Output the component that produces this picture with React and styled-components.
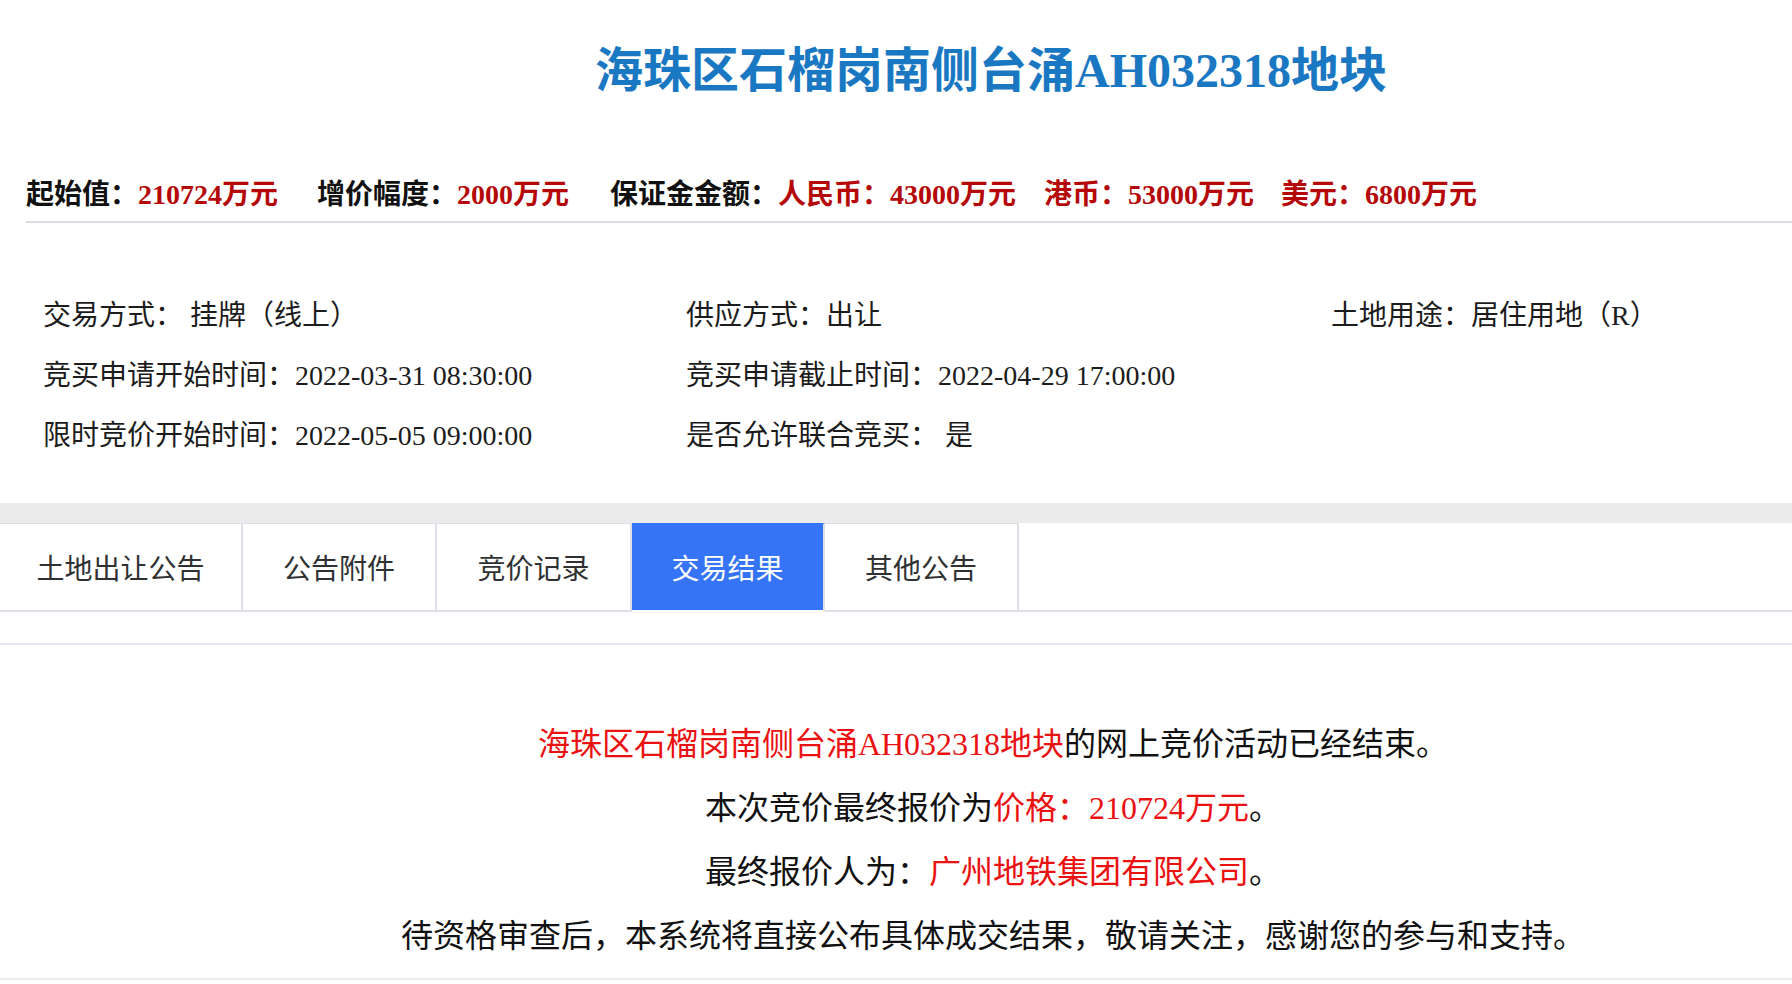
import React from "react";
import styled, { createGlobalStyle, css } from "styled-components";

const GlobalStyle = createGlobalStyle`
  html, body {
    margin: 0;
    padding: 0;
    background: #ffffff;
  }
  body {
    font-family: "Liberation Serif", "Noto Sans CJK SC", serif;
    color: #222;
  }
`;

const Page = styled.div`
  width: 1792px;
  min-height: 984px;
  background: #fff;
  overflow: hidden;
`;

const Title = styled.h1`
  margin: 0;
  padding: 47px 0 0 190px;
  text-align: center;
  font-size: 48px;
  line-height: 48px;
  font-weight: bold;
  color: #1a78c2;
  font-family: "Liberation Serif", "Noto Sans CJK SC", serif;
`;

const PriceRow = styled.div`
  display: flex;
  align-items: center;
  margin: 80px 0 0 26px;
  padding-bottom: 6px;
  height: 40px;
  border-bottom: 2px solid #d9dce3;
  font-size: 28px;
  line-height: 40px;
  font-weight: bold;
  white-space: nowrap;
`;

const PriceItem = styled.span`
  color: #111;
  margin-right: ${(p) => p.$gap || 0}px;
`;

const Red = styled.span`
  color: #b50808;
`;

const InfoGrid = styled.div`
  display: grid;
  grid-template-columns: 643px 645px 1fr;
  grid-auto-rows: 60px;
  padding: 60px 0 40px 43px;
  font-size: 28px;
  color: #1c1c1c;
`;

const InfoCell = styled.div`
  display: flex;
  align-items: center;
  white-space: nowrap;
`;

const GrayBand = styled.div`
  height: 20px;
  background: #ebebeb;
`;

const TabBar = styled.div`
  display: flex;
  height: 87px;
  border-bottom: 2px solid #dcdfe6;
`;

const Tab = styled.div`
  box-sizing: border-box;
  width: ${(p) => p.$w}px;
  height: 89px;
  display: flex;
  align-items: center;
  justify-content: center;
  font-size: 28px;
  font-family: "Noto Sans CJK SC", "Liberation Sans", sans-serif;
  color: #303133;
  background: #fff;
  border-top: 1px solid #dcdfe6;
  border-right: 2px solid #dcdfe6;
  border-bottom: 2px solid #dcdfe6;
  ${(p) =>
    p.$active &&
    css`
      background: #3574f6;
      color: #fff;
      border-top-color: #3574f6;
      border-bottom-color: #fff;
    `}
`;

const Spacer = styled.div`
  height: 31px;
  border-bottom: 2px solid #e4e7ed;
`;

const Result = styled.div`
  padding: 67px 0 10px 194px;
  text-align: center;
  font-size: 32px;
  line-height: 64px;
  color: #111;
  border-bottom: 2px solid #ececec;
`;

const ResultLine = styled.p`
  margin: 0;
  white-space: nowrap;
`;

const Hl = styled.span`
  color: #ea1111;
`;

const tabs = [
  { label: "土地出让公告", w: 243 },
  { label: "公告附件", w: 194 },
  { label: "竞价记录", w: 195 },
  { label: "交易结果", w: 193, active: true },
  { label: "其他公告", w: 194 },
];

export default function App() {
  return (
    <Page>
      <GlobalStyle />
      <Title>海珠区石榴岗南侧台涌AH032318地块</Title>
      <PriceRow>
        <PriceItem $gap={39}>
          起始值：<Red>210724万元</Red>
        </PriceItem>
        <PriceItem $gap={41}>
          增价幅度：<Red>2000万元</Red>
        </PriceItem>
        <PriceItem $gap={28}>
          保证金金额：<Red>人民币：43000万元</Red>
        </PriceItem>
        <PriceItem $gap={27}>
          <Red>港币：53000万元</Red>
        </PriceItem>
        <PriceItem>
          <Red>美元：6800万元</Red>
        </PriceItem>
      </PriceRow>
      <InfoGrid>
        <InfoCell>交易方式：&nbsp;挂牌（线上）</InfoCell>
        <InfoCell>供应方式：出让</InfoCell>
        <InfoCell>土地用途：居住用地（R）</InfoCell>
        <InfoCell>竞买申请开始时间：2022-03-31 08:30:00</InfoCell>
        <InfoCell>竞买申请截止时间：2022-04-29 17:00:00</InfoCell>
        <InfoCell />
        <InfoCell>限时竞价开始时间：2022-05-05 09:00:00</InfoCell>
        <InfoCell>是否允许联合竞买：&nbsp;是</InfoCell>
        <InfoCell />
      </InfoGrid>
      <GrayBand />
      <TabBar>
        {tabs.map((t) => (
          <Tab key={t.label} $w={t.w} $active={t.active}>
            {t.label}
          </Tab>
        ))}
      </TabBar>
      <Spacer />
      <Result>
        <ResultLine>
          <Hl>海珠区石榴岗南侧台涌AH032318地块</Hl>的网上竞价活动已经结束。
        </ResultLine>
        <ResultLine>
          本次竞价最终报价为<Hl>价格：210724万元</Hl>。
        </ResultLine>
        <ResultLine>
          最终报价人为：<Hl>广州地铁集团有限公司</Hl>。
        </ResultLine>
        <ResultLine>
          待资格审查后，本系统将直接公布具体成交结果，敬请关注，感谢您的参与和支持。
        </ResultLine>
      </Result>
    </Page>
  );
}
